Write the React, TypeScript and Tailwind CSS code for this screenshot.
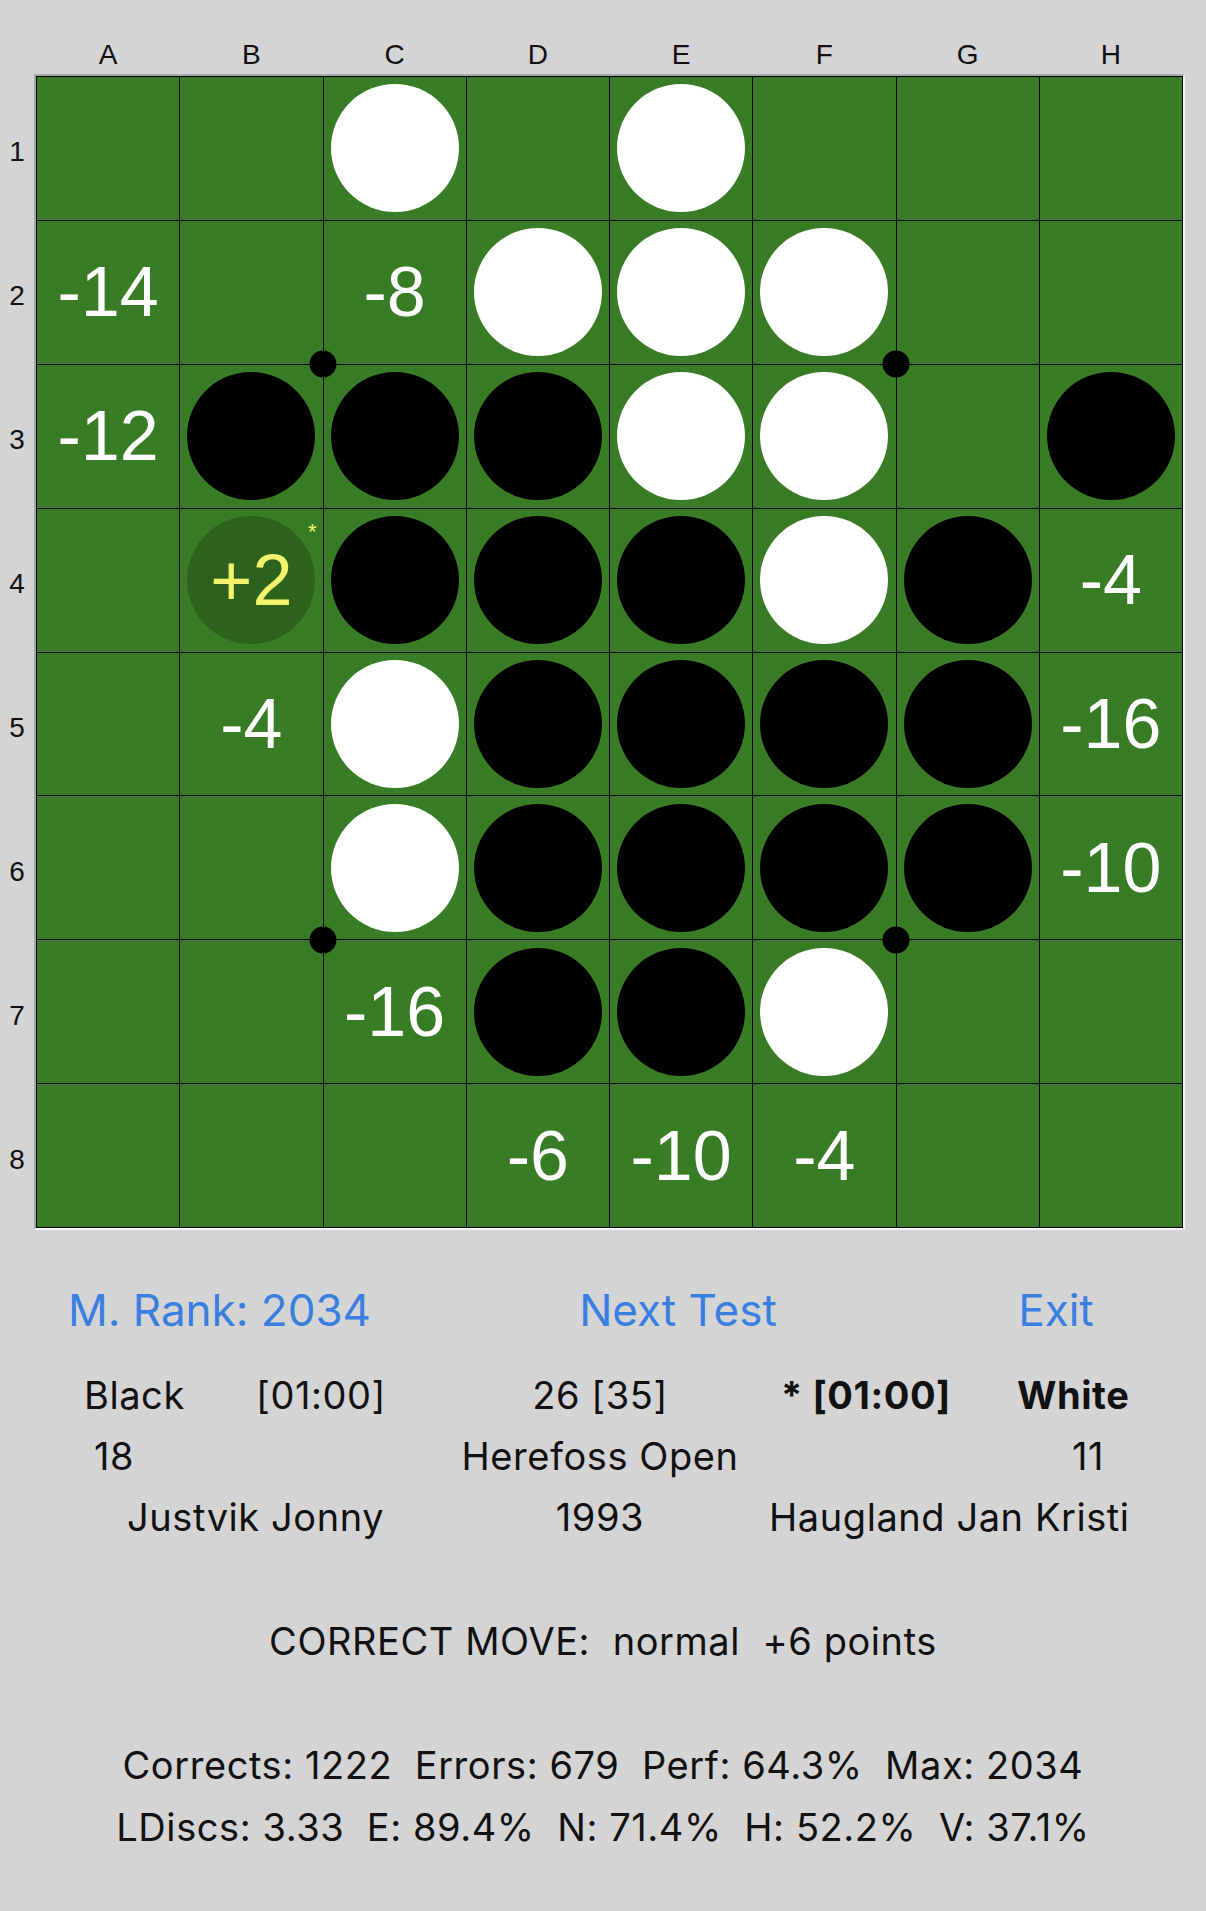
import React from "react";

// Board position: "W" white disc, "B" black disc, "+n" suggested move, "-n" move score
const BOARD: string[][] = [
  ["", "", "W", "", "W", "", "", ""],
  ["-14", "", "-8", "W", "W", "W", "", ""],
  ["-12", "B", "B", "B", "W", "W", "", "B"],
  ["", "+2", "B", "B", "B", "W", "B", "-4"],
  ["", "-4", "W", "B", "B", "B", "B", "-16"],
  ["", "", "W", "B", "B", "B", "B", "-10"],
  ["", "", "-16", "B", "B", "W", "", ""],
  ["", "", "", "-6", "-10", "-4", "", ""],
];

const COLS = ["A", "B", "C", "D", "E", "F", "G", "H"];
const ROWS = ["1", "2", "3", "4", "5", "6", "7", "8"];

const Cell: React.FC<{ v: string }> = ({ v }) => {
  if (v === "W" || v === "B") {
    return (
      <div className="flex items-center justify-center bg-[#387d25]">
        <div className={`h-[128px] w-[128px] rounded-full ${v === "W" ? "bg-white" : "bg-black"}`} />
      </div>
    );
  }
  if (v.startsWith("+")) {
    return (
      <div className="relative flex items-center justify-center bg-[#387d25]">
        <div className="flex h-[128px] w-[128px] items-center justify-center rounded-full bg-[#2c621c] text-[72px] leading-none text-[#f2f26c]">
          {v}
        </div>
        <span className="absolute right-[6px] top-[12px] text-[22px] leading-none text-[#f2f26c]">*</span>
      </div>
    );
  }
  return (
    <div className="flex items-center justify-center bg-[#387d25] text-[70px] leading-none text-white">
      {v}
    </div>
  );
};

export default function App() {
  return (
    <div
      className="h-[1911px] w-[1206px] overflow-hidden bg-[#d4d4d4] text-[#111]"
      style={{ fontFamily: '"Liberation Sans", Arial, sans-serif' }}
    >
      {/* Column letters */}
      <div className="flex h-[74px] pl-[36px]">
        <div className="grid w-[1147px] grid-cols-8 gap-px px-px pt-[41px]">
          {COLS.map((c) => (
            <div key={c} className="text-center text-[28px] leading-[28px]">
              {c}
            </div>
          ))}
        </div>
      </div>

      <div className="flex">
        {/* Row numbers */}
        <div className="grid h-[1152px] w-[34px] grid-rows-8 gap-px py-px mt-[2px]">
          {ROWS.map((r) => (
            <div key={r} className="flex items-center justify-center pt-[8px] text-[28px] leading-[28px]">
              {r}
            </div>
          ))}
        </div>

        {/* Board with bevel frame */}
        <div className="border-2 border-t-[#a9a9a9] border-l-[#a9a9a9] border-b-[#f6f6f6] border-r-[#f6f6f6]">
          <div className="relative grid h-[1152px] w-[1147px] grid-cols-8 grid-rows-8 gap-px bg-black p-px">
            {BOARD.map((row, r) => row.map((v, c) => <Cell key={`${r}-${c}`} v={v} />))}
            <span className="absolute left-1/4 top-1/4 h-[27px] w-[27px] -translate-x-1/2 -translate-y-1/2 rounded-full bg-black" />
            <span className="absolute left-3/4 top-1/4 h-[27px] w-[27px] -translate-x-1/2 -translate-y-1/2 rounded-full bg-black" />
            <span className="absolute left-1/4 top-3/4 h-[27px] w-[27px] -translate-x-1/2 -translate-y-1/2 rounded-full bg-black" />
            <span className="absolute left-3/4 top-3/4 h-[27px] w-[27px] -translate-x-1/2 -translate-y-1/2 rounded-full bg-black" />
          </div>
        </div>
      </div>

      {/* Info panel */}
      <div style={{ fontFamily: "Inter, \"Noto Sans\", sans-serif" }}>
        <div className="mt-[50px] grid h-[60px] grid-cols-[450px_456px_300px] items-center text-[44px] leading-[60px] text-[#3a7fe0]">
          <div className="pl-[68px]">M. Rank: 2034</div>
          <div className="text-center">Next Test</div>
          <div className="text-center">Exit</div>
        </div>

        <div className="mt-[25px] text-[38px] leading-[61px] tracking-[0.015em]">
          <div className="grid grid-cols-[450px_300px_456px]">
            <div className="flex pl-[84px]">
              <span className="w-[172px]">Black</span>
              <span>[01:00]</span>
            </div>
            <div className="text-center">26 [35]</div>
            <div className="flex pl-[31px] font-bold">
              <span className="w-[236px]">* [01:00]</span>
              <span>White</span>
            </div>
          </div>
          <div className="grid grid-cols-[450px_300px_456px]">
            <div className="pl-[94px]">18</div>
            <div className="whitespace-nowrap text-center">Herefoss Open</div>
            <div className="pr-[102px] text-right">11</div>
          </div>
          <div className="grid grid-cols-[450px_300px_456px]">
            <div className="pl-[127px]">Justvik Jonny</div>
            <div className="text-center">1993</div>
            <div className="whitespace-nowrap pl-[19px]">Haugland Jan Kristi</div>
          </div>
        </div>

        <div className="mt-[63px] whitespace-pre text-center text-[38px] leading-[61px] tracking-[0.015em]">
          CORRECT MOVE:  normal  +6 points
        </div>

        <div className="mt-[62px] whitespace-pre text-center text-[38px] leading-[62px] tracking-[0.015em]">
          <div>Corrects: 1222  Errors: 679  Perf: 64.3%  Max: 2034</div>
          <div>LDiscs: 3.33  E: 89.4%  N: 71.4%  H: 52.2%  V: 37.1%</div>
        </div>
      </div>
    </div>
  );
}
